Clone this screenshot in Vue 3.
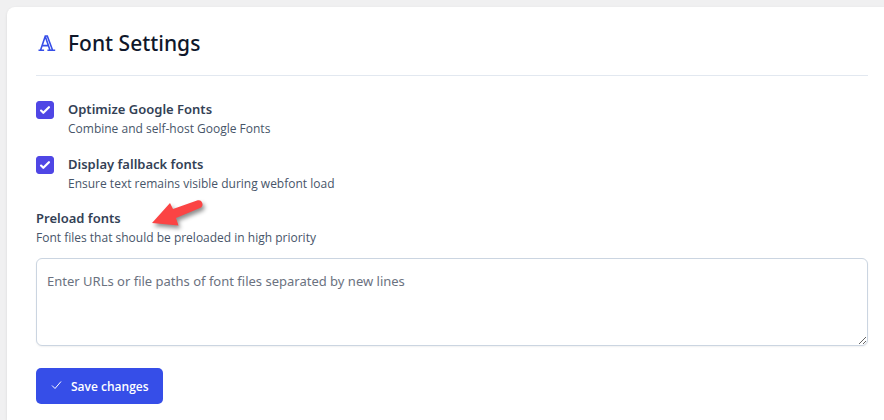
<script setup>
import { ref } from 'vue'

const options = ref([
  {
    id: 'optimize-google-fonts',
    title: 'Optimize Google Fonts',
    description: 'Combine and self-host Google Fonts',
    enabled: true,
  },
  {
    id: 'display-fallback-fonts',
    title: 'Display fallback fonts',
    description: 'Ensure text remains visible during webfont load',
    enabled: true,
  },
])
const preloadFonts = ref('')
</script>

<template>
  <main class="page">
    <form class="card" @submit.prevent>
      <header class="header">
        <svg class="header-icon" viewBox="0 0 21 20" aria-hidden="true">
          <path d="M2.5 17.2h5.6M4.6 17 9.3 3h2l5.2 14M6.2 12.6h6M9.3 3.4 14 17.2M11.4 17.2h7.8" />
        </svg>
        <h1 class="title">Font Settings</h1>
      </header>

      <div class="fields">
        <div class="options">
          <div v-for="option in options" :key="option.id" class="option">
            <span class="check">
              <input :id="option.id" v-model="option.enabled" class="check-input" type="checkbox" />
              <svg class="check-mark" viewBox="0 0 16 16" aria-hidden="true">
                <path d="M12.207 4.793a1 1 0 010 1.414l-5 5a1 1 0 01-1.414 0l-2-2a1 1 0 011.414-1.414L6.5 9.086l4.293-4.293a1 1 0 011.414 0z" />
              </svg>
            </span>
            <label class="text" :for="option.id">
              <span class="label">{{ option.title }}</span>
              <span class="description">{{ option.description }}</span>
            </label>
          </div>
        </div>

        <div class="preload">
          <label class="text" for="preload-fonts">
            <span class="label">Preload fonts</span>
            <span class="description">Font files that should be preloaded in high priority</span>
          </label>
          <svg class="arrow" viewBox="0 0 60 36" aria-hidden="true">
            <path d="M4 26 22 6l3 6 24-8.500c5-2 8 5.500 3 7.500L28 21l2.500 7.500z" />
          </svg>
          <textarea
            id="preload-fonts"
            v-model="preloadFonts"
            class="textarea"
            placeholder="Enter URLs or file paths of font files separated by new lines"
          ></textarea>
        </div>
      </div>

      <button class="save" type="submit">
        <svg class="save-icon" viewBox="0 0 12 12" aria-hidden="true">
          <path d="M1.500 5.500 4.500 8.500 10.500 1.500" />
        </svg>
        Save changes
      </button>
    </form>
  </main>
</template>

<style>
body {
  margin: 0;
  background: #f0f0f1;
}
</style>

<style scoped>
.page {
  box-sizing: border-box;
  min-height: 100vh;
  padding: 7px 0 0 7px;
  display: flex;
  font-family: "Noto Sans", "Open Sans", sans-serif;
  color: #334155;
}
.card {
  box-sizing: border-box;
  flex: 1;
  min-width: 0;
  padding: 20px 16px 16px 29px;
  background: #fff;
  border-radius: 8px 0 0 0;
  box-shadow: 0 1px 3px rgba(0, 0, 0, 0.1);
}
.header {
  display: flex;
  align-items: center;
  gap: 11px;
  padding-bottom: 16px;
  border-bottom: 1px solid #e2e8f0;
}
.header-icon {
  width: 21px;
  height: 20px;
  fill: none;
  stroke: #364ee8;
  stroke-width: 1.6;
}
.title {
  margin: 0;
  font-size: 21px;
  line-height: 32px;
  font-weight: 500;
  color: #0f172a;
}
.fields {
  display: flex;
  flex-direction: column;
  gap: 14px;
  padding-top: 23px;
}
.options {
  display: flex;
  flex-direction: column;
  gap: 15px;
}
.option {
  display: flex;
  gap: 14px;
}
.check {
  position: relative;
  width: 18px;
  height: 18px;
  margin-top: 2px;
}
.check-input {
  appearance: none;
  display: block;
  width: 18px;
  height: 18px;
  margin: 0;
  border: 1px solid #cbd5e1;
  border-radius: 3px;
  background: #fff;
}
.check-input:checked {
  border-color: #4f46e5;
  background: #4f46e5;
}
.check-mark {
  position: absolute;
  inset: 0;
  fill: #fff;
  pointer-events: none;
}
.text {
  display: flex;
  flex-direction: column;
  align-items: flex-start;
}
.label {
  font-size: 13px;
  line-height: 20px;
  font-weight: 600;
}
.description {
  font-family: "Open Sans", "Noto Sans", sans-serif;
  font-size: 12px;
  line-height: 20px;
  color: #475569;
}
.preload {
  position: relative;
  display: flex;
  flex-direction: column;
  gap: 10px;
}
.arrow {
  position: absolute;
  top: -11px;
  left: 112px;
  width: 60px;
  height: 36px;
  fill: #fb4444;
  filter: drop-shadow(2px 3px 2px rgba(0, 0, 0, 0.45));
  pointer-events: none;
}
.textarea {
  box-sizing: border-box;
  display: block;
  width: 100%;
  height: 88px;
  padding: 12px 10px;
  border: 1px solid #cbd5e1;
  border-radius: 6px;
  background: #fff;
  box-shadow: 0 1px 2px rgba(0, 0, 0, 0.06);
  font-family: inherit;
  font-size: 13px;
  line-height: 20px;
  color: #334155;
  resize: vertical;
}
.textarea::placeholder {
  color: #6b7280;
  opacity: 1;
}
.save {
  display: flex;
  align-items: center;
  gap: 8px;
  height: 36px;
  margin-top: 22px;
  padding: 0 14px;
  border: 0;
  border-radius: 5px;
  background: #364ee8;
  color: #fff;
  font-family: "Open Sans", "Noto Sans", sans-serif;
  font-size: 12px;
  font-weight: 600;
}
.save-icon {
  width: 13px;
  height: 12px;
  fill: none;
  stroke: #fff;
  stroke-width: 1;
}
</style>
